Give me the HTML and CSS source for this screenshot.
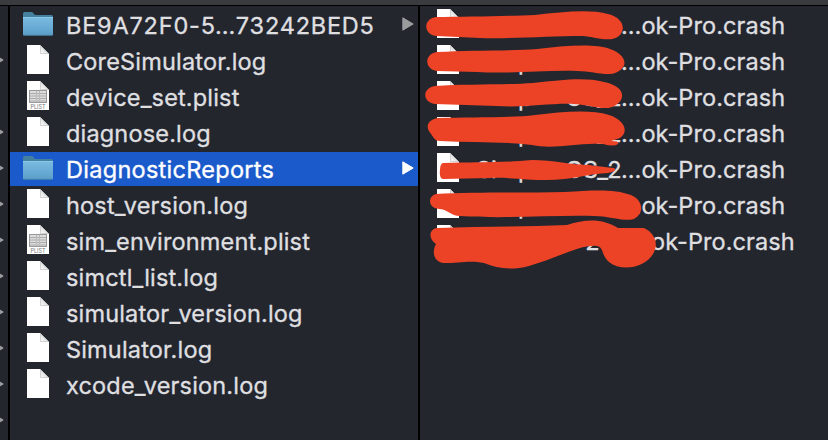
FILE: index.html
```html
<!DOCTYPE html>
<html lang="en">
<head>
<meta charset="utf-8">
<title>Finder columns</title>
<link rel="stylesheet" href="styles.css">
</head>
<body>
<svg class="defs" aria-hidden="true">
  <defs>
    <linearGradient id="blue" x1="0" y1="0" x2="0" y2="1"><stop offset="0" stop-color="#7abbe0"/><stop offset="1" stop-color="#5b9fc9"/></linearGradient>
    <linearGradient id="fold" x1="0" y1="1" x2="1" y2="0"><stop offset="0" stop-color="#fff"/><stop offset=".5" stop-color="#e2e2e2"/><stop offset="1" stop-color="#fff"/></linearGradient>
    <symbol id="folder" viewBox="0 0 30 24">
      <path d="M0 22V1.5Q0 0 1.500 0H8.500Q10 0 11 2Q11.500 3 13 3H28.500Q30 3 30 4.500V22Z" fill="#45819f"/>
      <path d="M0 5H30V22.500Q30 23.500 29 23.500H1Q0 23.500 0 22.500Z" fill="url(#blue)"/>
      <path d="M0 5.500H30" stroke="#8bcbe9"/><path d="M.5 23.200H29.500" stroke="#477c9f" stroke-width=".7"/>
    </symbol>
    <symbol id="file" viewBox="0 0 22 29">
      <path d="M0 0H13L22 9V29H0Z" fill="#fff"/><path d="M13 0L22 9H13.500Z" fill="url(#fold)"/>
      <path d="M13.500 1V8.500H21" fill="none" stroke="#c9c9c9" stroke-width=".8"/>
    </symbol>
    <symbol id="plist" viewBox="0 0 22 29">
      <use href="#file"/>
      <rect x="2.500" y="9.500" width="17" height="12" fill="#ddd" stroke="#999"/>
      <path d="M3 12.500H19M3 15H19M3 17.500H19M3 20H19" stroke="#aaa"/>
      <path d="M9.500 10V21M12.500 10V21" stroke="#bbb"/>
      <text x="11" y="27.500" class="tag">PLIST</text>
    </symbol>
    <symbol id="arrow" viewBox="0 0 12 14"><path d="M.8 .8L11.200 7L.8 13.200Z" fill="currentColor" stroke="currentColor" stroke-linejoin="round"/></symbol>
  </defs>
</svg>
<div class="toolbar"></div>
<main class="columns">
  <div class="column parents">
    <div class="row"></div>
    <div class="row"><svg class="arrow"><use href="#arrow"/></svg></div>
    <div class="row"></div>
    <div class="row"><svg class="arrow"><use href="#arrow"/></svg></div>
    <div class="row"><svg class="arrow"><use href="#arrow"/></svg></div>
    <div class="row"><svg class="arrow"><use href="#arrow"/></svg></div>
    <div class="row"><svg class="arrow"><use href="#arrow"/></svg></div>
    <div class="row"><svg class="arrow"><use href="#arrow"/></svg></div>
    <div class="row"><svg class="arrow"><use href="#arrow"/></svg></div>
    <div class="row"><svg class="arrow"><use href="#arrow"/></svg></div>
    <div class="row"><svg class="arrow"><use href="#arrow"/></svg></div>
    <div class="row"><svg class="arrow"><use href="#arrow"/></svg></div>
  </div>
  <div class="column files">
    <div class="row"><span class="icon"><svg class="folder"><use href="#folder"/></svg></span><span class="name uuid">BE9A72F0-5…73242BED5</span><svg class="arrow"><use href="#arrow"/></svg></div>
    <div class="row"><span class="icon"><svg class="file"><use href="#file"/></svg></span><span class="name">CoreSimulator.log</span></div>
    <div class="row"><span class="icon"><svg class="file"><use href="#plist"/></svg></span><span class="name">device_set.plist</span></div>
    <div class="row"><span class="icon"><svg class="file"><use href="#file"/></svg></span><span class="name">diagnose.log</span></div>
    <div class="row selected"><span class="icon"><svg class="folder"><use href="#folder"/></svg></span><span class="name">DiagnosticReports</span><svg class="arrow"><use href="#arrow"/></svg></div>
    <div class="row"><span class="icon"><svg class="file"><use href="#file"/></svg></span><span class="name">host_version.log</span></div>
    <div class="row"><span class="icon"><svg class="file"><use href="#plist"/></svg></span><span class="name">sim_environment.plist</span></div>
    <div class="row"><span class="icon"><svg class="file"><use href="#file"/></svg></span><span class="name">simctl_list.log</span></div>
    <div class="row"><span class="icon"><svg class="file"><use href="#file"/></svg></span><span class="name">simulator_version.log</span></div>
    <div class="row"><span class="icon"><svg class="file"><use href="#file"/></svg></span><span class="name">Simulator.log</span></div>
    <div class="row"><span class="icon"><svg class="file"><use href="#file"/></svg></span><span class="name">xcode_version.log</span></div>
  </div>
  <div class="column reports">
    <div class="row"><svg class="file"><use href="#file"/></svg><span class="lead"></span><span class="name">…ok-Pro.crash</span></div>
    <div class="row"><svg class="file"><use href="#file"/></svg><span class="lead"><span class="p">p</span><span class="end">_</span></span><span class="name">…ok-Pro.crash</span></div>
    <div class="row"><svg class="file"><use href="#file"/></svg><span class="lead"><span class="p">p</span><span class="end">OS_2</span></span><span class="name">…ok-Pro.crash</span></div>
    <div class="row"><svg class="file"><use href="#file"/></svg><span class="lead"><span class="p">p</span><span class="end">_2</span></span><span class="name">…ok-Pro.crash</span></div>
    <div class="row"><svg class="file"><use href="#file"/></svg><span class="lead"><span class="s">Si</span><span class="p">p</span><span class="end">OS_2</span></span><span class="name">…ok-Pro.crash</span></div>
    <div class="row"><svg class="file"><use href="#file"/></svg><span class="lead"><span class="p">p</span><span class="end">_2</span></span><span class="name">…ok-Pro.crash</span></div>
    <div class="row last"><svg class="file"><use href="#file"/></svg><span class="lead"><span class="end">2</span></span><span class="name">ok-Pro.crash</span></div>
    <svg class="marks" viewBox="420 0 408 440" aria-hidden="true">
      <path d="M436 17C465 17 507 16 535 15C562 12 590 9 608 14C624 18 626 30 619 36C611 43 596 37 582 36C550 36 510 39 480 38L436 36C423 34 423 19 436 17Z"/>
      <path d="M437 52C470 50 510 51 537 49C563 46 594 43 610 49C625 54 629 65 619 71C609 78 595 71 577 71C543 70 510 74 477 72L437 71C424 69 424 54 437 52Z"/>
      <path d="M435 86C465 84 505 85 533 83C562 80 585 77 604 82C625 86 626 99 616 105C606 112 592 105 574 104C550 103 525 108 496 106L435 104C422 102 422 88 435 86Z"/>
      <path d="M438 118C470 117 510 118 535 115C561 112 590 109 609 115C625 120 629 132 620 138L611 141Q620 141 618 144Q614 147 603 144C578 142 555 150 532 145C500 141 470 143 440 141C434 141 433 136 431 134C425 127 427 120 438 118Z"/>
      <path d="M443 163C475 162 500 163 532 160C553 160 572 165 589 165Q604 167 614 168Q618 171 608 173C590 174 576 178 564 179C539 182 515 177 490 178L443 179Q439 178 440 170Q440 164 443 163Z"/>
      <path d="M436 194C475 192 525 193 565 192C594 190 615 189 631 195C643 200 645 213 634 219C623 222 610 216 594 216C552 215 505 219 460 216C451 216 447 209 439 209C427 208 428 196 436 194Z"/>
      <path d="M437 228C480 226 525 227 567 225C587 218 604 219 618 228H644C655 233 659 244 653 254C645 268 621 272 609 262C601 255 604 247 597 246C589 245 580 248 571 251C557 256 543 262 529 266C510 271 497 268 484 263C470 260 460 263 443 263C433 261 432 251 436 244C428 239 429 229 437 228Z"/>
    </svg>
  </div>
</main>
</body>
</html>
```
FILE: styles.css
```css
* { box-sizing: border-box; }
body {
  margin: 0;
  width: 828px;
  height: 440px;
  overflow: hidden;
  background: #23262d;
  color: #dfdfe0;
  font-family: Inter, "Liberation Sans", sans-serif;
  font-size: 23.5px;
}
.defs { position: absolute; width: 0; height: 0; }
.toolbar { height: 6px; background: #393c3f; border-bottom: 1px solid #000; }
.columns { display: flex; height: 434px; }
.column {
  display: flex;
  flex-direction: column;
  gap: 2px;
  padding-top: 2px;
  overflow: hidden;
}
.row { display: flex; align-items: center; height: 34px; flex: none; }
.parents { width: 10px; border-right: 2px solid #000; }
.parents .row { justify-content: flex-end; padding-right: 4px; }
.files { width: 410px; border-right: 2px solid #000; }
.files .row { padding: 0 4px 0 12px; }
.icon { display: flex; justify-content: center; width: 32px; margin-right: 12px; }
svg { display: block; flex: none; }
.folder { width: 30px; height: 24px; margin-bottom: 2px; }
.file { width: 22px; height: 29px; margin-bottom: 3px; }
.arrow { width: 12px; height: 14px; margin-left: auto; margin-bottom: 2px; color: #9b9c9e; }
.name, .lead {
  white-space: nowrap;
  line-height: 34px;
  padding-top: 1px;
  -webkit-text-stroke: 0.35px currentColor;
}
.name { letter-spacing: 0.17px; }
.uuid { letter-spacing: 0.8px; }
.selected { background: #1b5aca; color: #fff; }
.selected .arrow { color: #fff; }
.selected .name { letter-spacing: 0.28px; }
.tag { font: 5.5px Inter, sans-serif; fill: #777; text-anchor: middle; }
.reports { position: relative; flex: 1; }
.reports .row { padding-left: 17px; }
.reports .name { letter-spacing: 0.08px; }
.lead { display: flex; width: 162px; padding-left: 17px; }
.s { width: 0; }
.p { width: 0; padding-left: 42px; }
.end { margin-left: auto; letter-spacing: -0.6px; }
.row:nth-child(2) .end { margin-right: 15px; }
.last .lead { width: 192px; padding-right: 52px; }
.marks { position: absolute; left: 0; top: -6px; width: 408px; height: 440px; fill: #ec4226; }
```
